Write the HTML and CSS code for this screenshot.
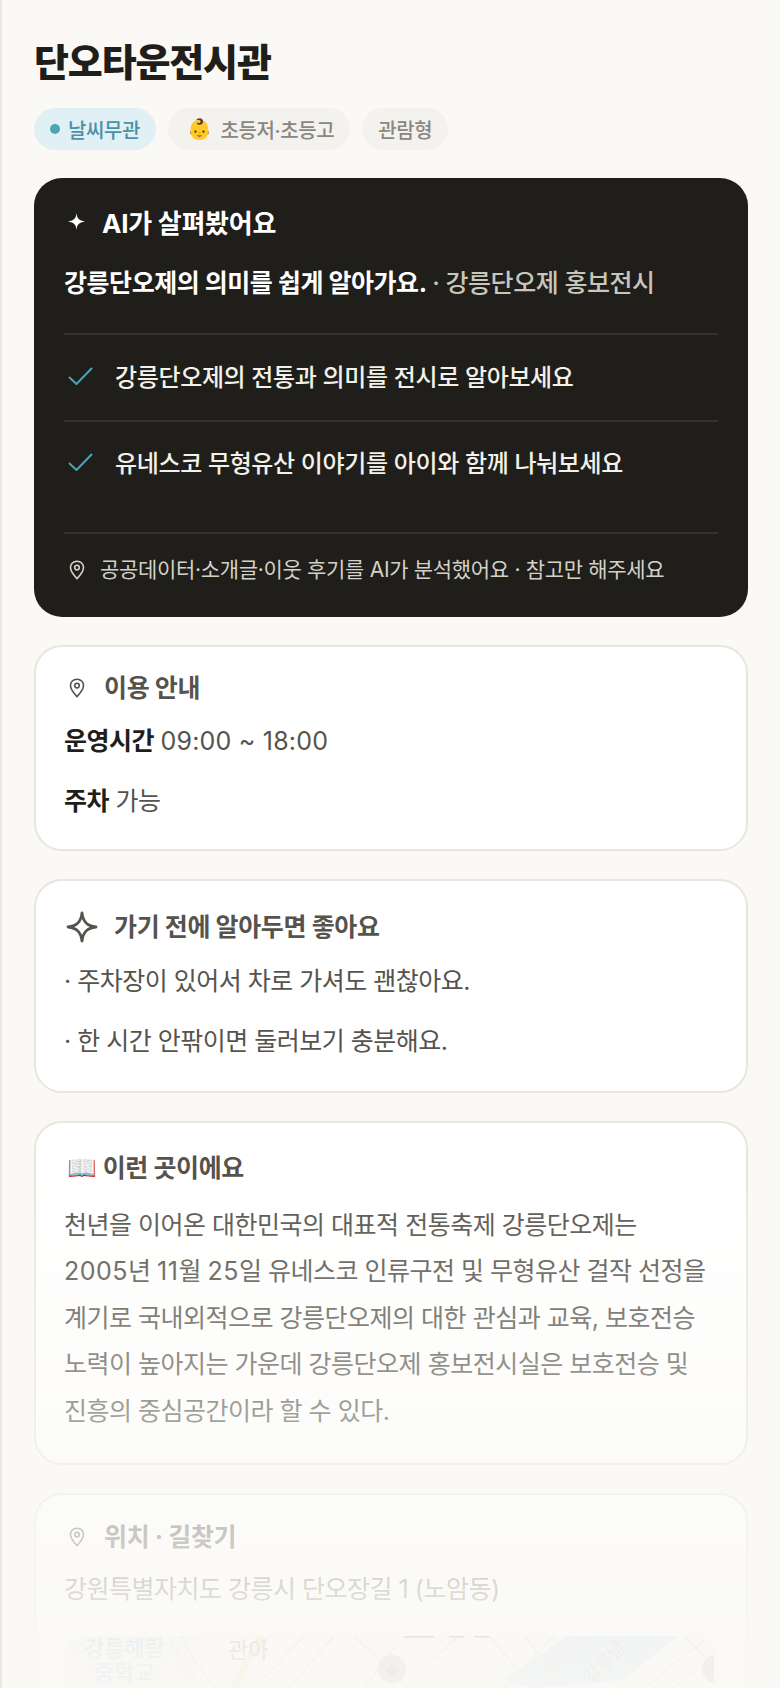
FILE: index.html
```html
<!DOCTYPE html>
<html lang="ko">
<head>
    <meta charset="UTF-8">
    <meta name="viewport" content="width=device-width, initial-scale=1.0">
    <title>단오타운전시관</title>
    <link rel="stylesheet" href="styles.css">
</head>
<body>
    <main class="page">
        <h1 class="title">단오타운전시관</h1>
        <div class="chips">
            <span class="chip chip-blue"><i class="dot"></i>날씨무관</span>
            <span class="chip"><span class="chip-emoji">👶</span>초등저·초등고</span>
            <span class="chip">관람형</span>
        </div>

        <section class="ai-card">
            <div class="ai-head">
                <svg class="ai-star" viewBox="0 0 16 16"><path d="M8 0C8.500 5 10 7 16 8C10 9 8.500 11 8 16C7.500 11 6 9 0 8C6 7 7.500 5 8 0Z" fill="#fff"/></svg>
                <span>AI가 살펴봤어요</span>
            </div>
            <p class="ai-summary"><b>강릉단오제의 의미를 쉽게 알아가요.</b> <span class="ai-place">· 강릉단오제 홍보전시</span></p>
            <ul class="ai-list">
                <li>
                    <svg class="check" viewBox="0 0 25 18"><path d="M1 10L8.500 17L24 1" fill="none" stroke="#4fa3b5" stroke-width="2"/></svg>
                    강릉단오제의 전통과 의미를 전시로 알아보세요
                </li>
                <li>
                    <svg class="check" viewBox="0 0 25 18"><path d="M1 10L8.500 17L24 1" fill="none" stroke="#4fa3b5" stroke-width="2"/></svg>
                    유네스코 무형유산 이야기를 아이와 함께 나눠보세요
                </li>
            </ul>
            <div class="ai-foot">
                <svg class="pin" viewBox="0 0 16 20"><path d="M8 1.200C4.200 1.200 1.500 4 1.500 7.600C1.500 11.500 5 15.500 8 18.600C11 15.500 14.500 11.500 14.500 7.600C14.500 4 11.800 1.200 8 1.200Z" fill="none" stroke="currentColor" stroke-width="1.600"/><circle cx="8" cy="7.600" r="2.300" fill="none" stroke="currentColor" stroke-width="1.600"/></svg>
                공공데이터·소개글·이웃 후기를 AI가 분석했어요 · 참고만 해주세요
            </div>
        </section>

        <section class="card card-info">
            <h2 class="card-title">
                <svg class="pin" viewBox="0 0 16 20"><path d="M8 1.200C4.200 1.200 1.500 4 1.500 7.600C1.500 11.500 5 15.500 8 18.600C11 15.500 14.500 11.500 14.500 7.600C14.500 4 11.800 1.200 8 1.200Z" fill="none" stroke="currentColor" stroke-width="1.600"/><circle cx="8" cy="7.600" r="2.300" fill="none" stroke="currentColor" stroke-width="1.600"/></svg>
                이용 안내
            </h2>
            <p class="info-row"><b>운영시간</b> <span class="time">09:00 ~ 18:00</span></p>
            <p class="info-row"><b>주차</b> 가능</p>
        </section>

        <section class="card card-tips">
            <h2 class="card-title">
                <svg class="tips-star" viewBox="0 0 32 32"><path d="M16 2C17 11 21 15 30 16C21 17 17 21 16 30C15 21 11 17 2 16C11 15 15 11 16 2Z" fill="none" stroke="currentColor" stroke-width="2.800" stroke-linejoin="round"/></svg>
                가기 전에 알아두면 좋아요
            </h2>
            <p class="tip">· 주차장이 있어서 차로 가셔도 괜찮아요.</p>
            <p class="tip">· 한 시간 안팎이면 둘러보기 충분해요.</p>
        </section>

        <section class="card card-about">
            <h2 class="card-title"><span class="book">📖</span>이런 곳이에요</h2>
            <p class="about">천년을 이어온 대한민국의 대표적 전통축제 강릉단오제는<br><span class="num">2005</span>년 <span class="num">11</span>월 <span class="num">25</span>일 유네스코 인류구전 및 무형유산 걸작 선정을<br>계기로 국내외적으로 강릉단오제의 대한 관심과 교육, 보호전승<br>노력이 높아지는 가운데 강릉단오제 홍보전시실은 보호전승 및<br>진흥의 중심공간이라 할 수 있다.</p>
        </section>

        <section class="card card-place">
            <h2 class="card-title">
                <svg class="pin" viewBox="0 0 16 20"><path d="M8 1.200C4.200 1.200 1.500 4 1.500 7.600C1.500 11.500 5 15.500 8 18.600C11 15.500 14.500 11.500 14.500 7.600C14.500 4 11.800 1.200 8 1.200Z" fill="none" stroke="currentColor" stroke-width="1.600"/><circle cx="8" cy="7.600" r="2.300" fill="none" stroke="currentColor" stroke-width="1.600"/></svg>
                위치 · 길찾기
            </h2>
            <p class="address">강원특별자치도 강릉시 단오장길 1 (노암동)</p>
            <div class="map">
                <svg class="map-lines" viewBox="0 0 650 52">
                    <path d="M503 0L613 0L560 44L470 52L440 44Z" fill="#8cc0d8"/>
                    <path d="M0 52L0 14Q10 0 40 0L130 0L130 52Z" fill="#dde2ea"/>
                    <path d="M199 0L180 30L170 52" fill="none" stroke="#e8c84c" stroke-width="8"/>
                    <path d="M106 0Q116 30 140 52M118 0Q128 26 152 52M206 0L166 52M270 0L225 52M290 0L345 52M240 0L190 52M330 12L300 52M395 0L350 40M425 0L470 52M460 0L505 52M490 0L440 52M520 0L470 52M640 4L580 52M655 14L610 52M620 0L660 40" fill="none" stroke="#aaa79c" stroke-width="1.500"/>
                    <path d="M340 0L370 0M385 0L400 0M410 0L425 0" stroke="#222" stroke-width="3"/>
                    <circle cx="328" cy="33" r="14" fill="#777"/>
                    <path d="M328 26L330.500 31.500L336 32L332 36L333 41L328 38.500L323 41L324 36L320 32L325.500 31.500Z" fill="#333"/>
                    <circle cx="652" cy="33" r="14" fill="#777"/>
                </svg>
                <span class="map-label map-school">강릉해람<br>중학교</span>
                <span class="map-label map-gwan">관아</span>
                <span class="map-label map-river">강릉남</span>
            </div>
        </section>
    </main>
    <div class="fade"></div>
</body>
</html>
```

FILE: styles.css
```css
* {
    box-sizing: border-box;
}

html, body {
    margin: 0;
    height: 1688px;
    overflow: hidden;
}

body {
    position: relative;
    font-family: Inter, "Noto Sans CJK KR", sans-serif;
    background-color: #faf9f5;
    color: #1f1e1a;
    border-left: 2px solid #e8e6de;
}

.page {
    padding: 40px 32px 0;
}

.title {
    margin: 0;
    font-size: 38px;
    line-height: 44px;
    font-weight: 800;
    letter-spacing: -0.03em;
    color: #1f1e1a;
}

.chips {
    display: flex;
    gap: 12px;
    margin-top: 24px;
}

.chip {
    display: flex;
    align-items: center;
    height: 42px;
    padding: 0 16px;
    border-radius: 21px;
    background-color: #f3f2ee;
    color: #8a8780;
    font-size: 20px;
    font-weight: 500;
    letter-spacing: -0.02em;
}

.chip-blue {
    background-color: #e1f0f5;
    color: #4a92a6;
}

.dot {
    width: 10px;
    height: 10px;
    margin-right: 8px;
    border-radius: 50%;
    background-color: #4fa3b5;
}

.chip-emoji {
    margin: 0 9px 0 3px;
    font-size: 20px;
}

.ai-card {
    margin-top: 28px;
    padding: 30px 30px 32px;
    border-radius: 28px;
    background-color: #1f1e1a;
    color: #fff;
}

.ai-head {
    display: flex;
    align-items: center;
    font-size: 26px;
    font-weight: 700;
    letter-spacing: -0.01em;
    line-height: 32px;
}

.ai-star {
    flex: none;
    width: 17px;
    height: 17px;
    margin: -6px 17px 0 4px;
}

.ai-summary {
    margin: 26px 0 0;
    padding-bottom: 33px;
    font-size: 25px;
    line-height: 34px;
    letter-spacing: -0.018em;
    border-bottom: 2px solid #33322e;
}

.ai-summary b {
    font-weight: 700;
}

.ai-place {
    margin-left: -1px;
    color: #c9c6bb;
    font-weight: 500;
}

.ai-list {
    margin: 0;
    padding: 0 0 28px;
    list-style: none;
    border-bottom: 2px solid #33322e;
}

.ai-list li {
    display: flex;
    align-items: center;
    height: 87px;
    padding-bottom: 4px;
    font-size: 24px;
    font-weight: 500;
    color: #f3f1e9;
    letter-spacing: -0.015em;
    border-bottom: 2px solid #33322e;
}

.ai-list li:last-child {
    height: 82px;
    border-bottom: none;
}

.check {
    flex: none;
    width: 25px;
    height: 18px;
    margin: 1px 22px 0 4px;
}

.ai-foot {
    display: flex;
    align-items: center;
    margin-top: 21px;
    font-size: 21px;
    line-height: 30px;
    color: #d4d1c7;
    letter-spacing: -0.015em;
}

.ai-foot .pin {
    margin-right: 15px;
}

.pin {
    flex: none;
    width: 16px;
    height: 20px;
    margin: 0 19px 0 5px;
}

.card {
    margin-top: 28px;
    padding: 24px 28px 30px;
    border: 2px solid #e8e6de;
    border-radius: 28px;
    background-color: #fff;
}

.card-tips {
    padding-top: 28px;
    padding-bottom: 32px;
}

.card-about {
    padding-top: 28px;
    padding-bottom: 29px;
}

.card-place {
    padding-top: 25px;
    padding-bottom: 0;
    border-bottom: none;
    border-radius: 28px 28px 0 0;
}

.card-title {
    display: flex;
    align-items: center;
    margin: 0;
    font-size: 25px;
    line-height: 34px;
    font-weight: 700;
    color: #55534c;
    letter-spacing: -0.015em;
}

.info-row {
    margin: 18px 0 0;
    font-size: 25px;
    line-height: 36px;
    color: #55534c;
    letter-spacing: -0.02em;
}

.info-row + .info-row {
    margin-top: 24px;
}

.info-row b {
    font-weight: 700;
    color: #1f1e1a;
}

.time {
    letter-spacing: 0.2px;
}

.tips-star {
    flex: none;
    width: 32px;
    height: 32px;
    margin: 0 16px 0 2px;
}

.card-tips .card-title {
    height: 36px;
}

.tip {
    margin: 18px 0 0;
    font-size: 25px;
    line-height: 36px;
    color: #55534c;
    letter-spacing: -0.02em;
}

.tip + .tip {
    margin-top: 24px;
}

.book {
    margin: 0 6px 0 3px;
    font-size: 24px;
}

.about {
    margin: 17px 0 0;
    font-size: 25px;
    line-height: 46.400px;
    color: #55534c;
    letter-spacing: -0.02em;
    white-space: nowrap;
}

.num {
    letter-spacing: 0.5px;
}

.address {
    margin: 17px 0 0;
    font-size: 25px;
    line-height: 36px;
    color: #55534c;
    letter-spacing: -0.02em;
}

.map {
    position: relative;
    height: 52px;
    margin-top: 29px;
    overflow: hidden;
    border-radius: 20px 20px 0 0;
    background-color: #f5f3ec;
}

.map-lines {
    position: absolute;
    top: 0;
    left: 0;
    width: 650px;
    height: 52px;
}

.map-label {
    position: absolute;
    font-size: 22px;
    line-height: 24px;
    font-weight: 500;
    color: #444;
    text-align: center;
}

.map-school {
    top: 0;
    left: 20px;
    color: #5b86c8;
}

.map-gwan {
    top: 2px;
    left: 164px;
}

.map-river {
    top: 14px;
    left: 516px;
    font-size: 18px;
    color: #55707f;
    transform: rotate(-45deg);
}

/* 화면 아래로 갈수록 흐려지는 부분 */
.fade {
    position: absolute;
    left: 0;
    right: 0;
    top: 1180px;
    bottom: 0;
    background: linear-gradient(to bottom, rgba(250, 249, 245, 0) 0%, rgba(250, 249, 245, 0.93) 92.500%, rgba(250, 249, 245, 0.94) 100%);
    pointer-events: none;
}
```
